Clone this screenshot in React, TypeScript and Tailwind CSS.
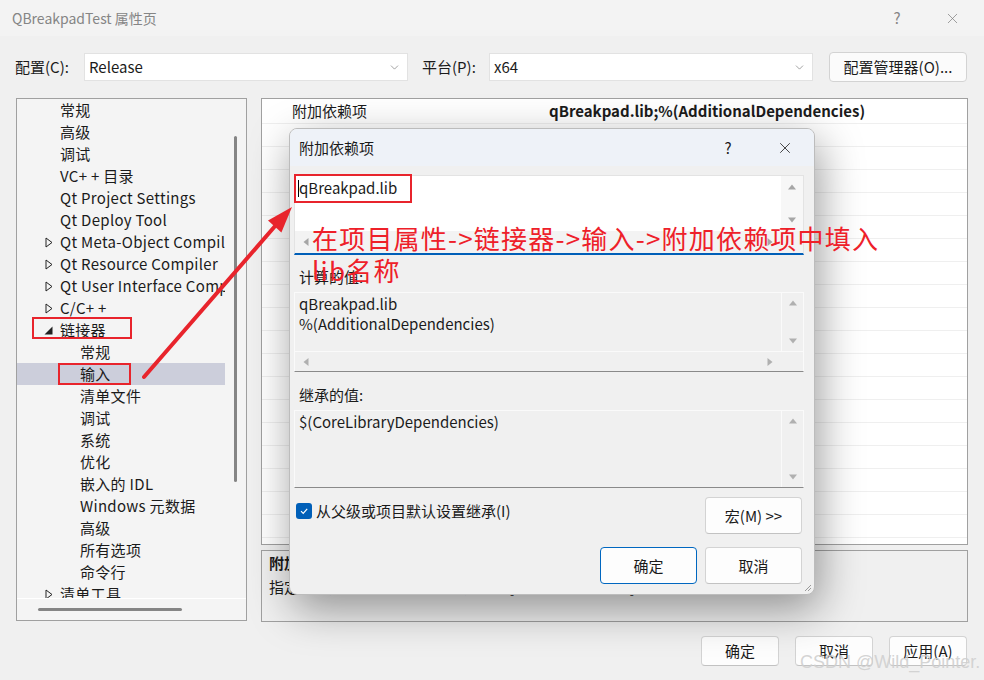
import React from 'react'
import { ChevronDown, X } from 'lucide-react'

type Item = { t: string; l: 1 | 2; a?: 'c' | 'e'; sel?: boolean }

const tree: Item[] = [
  { t: '常规', l: 1 },
  { t: '高级', l: 1 },
  { t: '调试', l: 1 },
  { t: 'VC+ + 目录', l: 1 },
  { t: 'Qt Project Settings', l: 1 },
  { t: 'Qt Deploy Tool', l: 1 },
  { t: 'Qt Meta-Object Compiler', l: 1, a: 'c' },
  { t: 'Qt Resource Compiler', l: 1, a: 'c' },
  { t: 'Qt User Interface Compiler', l: 1, a: 'c' },
  { t: 'C/C+ +', l: 1, a: 'c' },
  { t: '链接器', l: 1, a: 'e' },
  { t: '常规', l: 2 },
  { t: '输入', l: 2, sel: true },
  { t: '清单文件', l: 2 },
  { t: '调试', l: 2 },
  { t: '系统', l: 2 },
  { t: '优化', l: 2 },
  { t: '嵌入的 IDL', l: 2 },
  { t: 'Windows 元数据', l: 2 },
  { t: '高级', l: 2 },
  { t: '所有选项', l: 2 },
  { t: '命令行', l: 2 },
  { t: '清单工具', l: 1, a: 'c' },
]

const Arrow = ({ d, c = '#a6a6a6' }: { d: 'u' | 'd' | 'l' | 'r'; c?: string }) => {
  const pts = { u: '4,1.5 8,6.5 0,6.5', d: '0,1.5 8,1.5 4,6.5', l: '6.5,0 6.5,8 1.5,4', r: '1.5,0 1.5,8 6.5,4' }[d]
  return (
    <svg width="8" height="8" viewBox="0 0 8 8">
      <polygon points={pts} fill={c} />
    </svg>
  )
}

const Tri = ({ a }: { a?: 'c' | 'e' }) => {
  if (a === 'c')
    return (
      <svg width="8" height="11" viewBox="0 0 8 11">
        <polygon points="1,1 7,5.5 1,10" fill="none" stroke="#222" strokeWidth="1" />
      </svg>
    )
  if (a === 'e')
    return (
      <svg width="9" height="9" viewBox="0 0 9 9">
        <polygon points="8.5,0.5 8.5,8.5 0.5,8.5" fill="#222" />
      </svg>
    )
  return null
}

const Btn = ({ children, w, primary }: { children: React.ReactNode; w: string; primary?: boolean }) => (
  <div
    className={`${w} h-full flex items-center justify-center rounded-[4px] bg-[#fdfdfd] border ${
      primary ? 'border-[#0067c0]' : 'border-[#d3d3d3] border-b-[#c2c2c2]'
    }`}
  >
    {children}
  </div>
)

const App = () => {
  return (
    <div className="relative w-[984px] h-[680px] overflow-hidden bg-[#f0f0f0] font-['Noto_Sans_CJK_SC',sans-serif] text-[15px] leading-[20px] text-[#1b1b1b]">
      {/* window title */}
      <div className="h-[36px] bg-[#f3f3f3] flex items-center pl-[12px] text-[#858585] text-[14px]">
        <span>QBreakpadTest 属性页</span>
        <span className="ml-auto w-[46px] text-center text-[15px]">?</span>
        <span className="ml-[9px] mr-[9px] w-[46px] flex justify-center">
          <X size={17} strokeWidth={1} color="#7a7a7a" />
        </span>
      </div>

      {/* config row */}
      <div className="mt-[16px] h-[30px] flex items-center">
        <span className="ml-[15px] w-[69px]">配置(C):</span>
        <div className="w-[324px] h-[28px] bg-white border border-[#e2e2e2] flex items-center pl-[4px] pr-[6px]">
          <span>Release</span>
          <ChevronDown size={13} strokeWidth={1} className="ml-auto" color="#555" />
        </div>
        <span className="ml-[14px] w-[67px]">平台(P):</span>
        <div className="w-[324px] h-[28px] bg-white border border-[#e2e2e2] flex items-center pl-[4px] pr-[6px]">
          <span>x64</span>
          <ChevronDown size={13} strokeWidth={1} className="ml-auto" color="#555" />
        </div>
        <div className="ml-[16px] w-[138px] h-[30px] rounded-[4px] bg-[#fbfbfb] border border-[#d3d3d3] flex items-center justify-center">
          配置管理器(O)...
        </div>
      </div>

      {/* main */}
      <div className="mt-[16px] flex px-[16px] gap-[14px]">
        <div className="w-[231px] h-[523px] border border-[#a0a0a0] bg-[#f4f4f4] flex flex-col">
          <div className="flex flex-1 min-h-0">
            <div className="w-[208px] overflow-hidden">
              {tree.map((it, i) => (
                <div
                  key={i}
                  className={`h-[22px] flex items-center whitespace-nowrap ${it.sel ? 'bg-[#cccedb]' : ''}`}
                >
                  <span className={`${it.l === 1 ? 'w-[43px]' : 'w-[63px]'} shrink-0 flex justify-end pr-[7px]`}>
                    <Tri a={it.a} />
                  </span>
                  <span className="tracking-[0.3px]">{it.t}</span>
                </div>
              ))}
            </div>
            <div className="flex-1 pt-[37px] pl-[9px]">
              <div className="w-[3px] h-[346px] bg-[#858585] rounded-full" />
            </div>
          </div>
          <div className="h-[22px] border-t border-white flex items-center pl-[21px]">
            <div className="w-[144px] h-[3px] bg-[#858585] rounded-full" />
          </div>
        </div>

        <div className="w-[707px] flex flex-col gap-[5px]">
          <div className="h-[447px] border border-[#a0a0a0] bg-white overflow-hidden">
            <div className="h-[25px] flex items-center border-b border-[#efefef]">
              <div className="w-[284px] pl-[30px]">附加依赖项</div>
              <div className="pl-[3px] font-bold">qBreakpad.lib;%(AdditionalDependencies)</div>
            </div>
            {Array.from({ length: 18 }).map((_, i) => (
              <div key={i} className="h-[23px] border-b border-[#efefef]" />
            ))}
          </div>
          <div className="h-[72px] border border-[#a0a0a0] px-[7px] pt-[1px]">
            <div className="font-bold leading-[22px]">附加依赖项</div>
            <div className="mt-[2px] leading-[22px]">指定要添加到链接命令行的附加项。[例如 kernel32.lib]</div>
          </div>
        </div>
      </div>

      {/* bottom buttons */}
      <div className="mt-[14px] h-[30px] flex justify-end gap-[16px] pr-[17px]">
        <Btn w="w-[78px]">确定</Btn>
        <Btn w="w-[78px]">取消</Btn>
        <Btn w="w-[78px]">应用(A)</Btn>
      </div>

      {/* dialog */}
      <div className="absolute left-[289px] top-[128px] w-[526px] h-[467px] rounded-[8px] border border-[#bcbcbc] bg-[#f0f0f0] shadow-[4px_14px_44px_rgba(0,0,0,0.4)] overflow-hidden flex flex-col">
        <div className="h-[37px] shrink-0 bg-[#eef2f8] flex items-center pl-[9px]">
          <span>附加依赖项</span>
          <span className="ml-auto w-[46px] text-center">?</span>
          <span className="ml-[11px] mr-[6px] w-[46px] flex justify-center">
            <X size={18} strokeWidth={1.1} color="#222" />
          </span>
        </div>
        <div className="px-[4px] flex flex-col">
          {/* box 1 */}
          <div className="mt-[9px] w-[510px] h-[80px] border border-[#e3e3e3] border-b-2 border-b-[#005fb8] bg-white flex flex-col">
            <div className="flex-1 flex">
              <div className="flex-1 flex items-start pl-[3px] pt-[2px]">
                <span className="mt-[2px] w-px h-[17px] bg-black" />
                <span>qBreakpad.lib</span>
              </div>
              <div className="w-[22px] bg-[#f7f7f7] flex flex-col items-center justify-between py-[7px]">
                <Arrow d="u" />
                <Arrow d="d" />
              </div>
            </div>
            <div className="h-[22px] flex">
              <div className="flex-1 bg-[#f3f3f3] flex items-center justify-between px-[7px]">
                <Arrow d="l" />
                <Arrow d="r" />
              </div>
              <div className="w-[22px] bg-[#f3f3f3]" />
            </div>
          </div>

          <div className="h-[37px] pt-[12px] pl-[5px]">计算的值:</div>

          {/* box 2 */}
          <div className="w-[510px] h-[80px] border border-[#fafafa] border-b-[#8a8a8a] flex flex-col">
            <div className="h-[58px] flex">
              <div className="flex-1 pl-[4px] pt-[1px]">
                <div>qBreakpad.lib</div>
                <div>%(AdditionalDependencies)</div>
              </div>
              <div className="w-[22px] border-l border-[#fafafa] flex flex-col items-center justify-between py-[6px]">
                <Arrow d="u" c="#b0b0b0" />
                <Arrow d="d" c="#b0b0b0" />
              </div>
            </div>
            <div className="flex-1 flex border-t border-[#fafafa]">
              <div className="flex-1 flex items-center justify-between px-[7px]">
                <Arrow d="l" c="#b0b0b0" />
                <Arrow d="r" c="#b0b0b0" />
              </div>
              <div className="w-[22px]" />
            </div>
          </div>

          <div className="h-[38px] pt-[13px] pl-[5px]">继承的值:</div>

          {/* box 3 */}
          <div className="w-[510px] h-[78px] border border-[#fafafa] border-b-[#8a8a8a] flex">
            <div className="flex-1 pl-[4px] pt-[1px]">$(CoreLibraryDependencies)</div>
            <div className="w-[22px] border-l border-[#fafafa] flex flex-col items-center justify-between py-[6px]">
              <Arrow d="u" c="#b0b0b0" />
              <Arrow d="d" c="#b0b0b0" />
            </div>
          </div>

          <div className="mt-[9px] h-[37px] flex items-start mr-[8px]">
            <div className="ml-[2px] mt-[6px] w-[16px] h-[16px] rounded-[3px] bg-[#005fb8] flex items-center justify-center">
              <svg width="10" height="10" viewBox="0 0 10 10">
                <polyline points="2,5.2 4.2,7.4 8.2,2.8" fill="none" stroke="white" strokeWidth="1.2" />
              </svg>
            </div>
            <span className="ml-[4px] mt-[4px]">从父级或项目默认设置继承(I)</span>
            <div className="ml-auto h-full">
              <Btn w="w-[97px]">宏(M) &gt;&gt;</Btn>
            </div>
          </div>

          <div className="mt-[13px] h-[37px] flex justify-end gap-[8px] mr-[8px]">
            <Btn w="w-[97px]" primary>
              确定
            </Btn>
            <Btn w="w-[97px]">取消</Btn>
          </div>
        </div>
        <svg className="absolute right-[2px] bottom-[2px]" width="10" height="10" viewBox="0 0 10 10">
          <line x1="9" y1="3" x2="3" y2="9" stroke="#9a9a9a" strokeWidth="1" />
          <line x1="9" y1="6" x2="6" y2="9" stroke="#9a9a9a" strokeWidth="1" />
        </svg>
      </div>

      {/* annotations */}
      <svg className="absolute inset-0 pointer-events-none" width="984" height="680" viewBox="0 0 984 680">
        <rect x="33" y="318" width="98" height="20" fill="none" stroke="#e8242c" strokeWidth="2" />
        <rect x="59" y="364" width="71" height="20" fill="none" stroke="#e8242c" strokeWidth="2" />
        <rect x="295" y="175" width="116" height="27" fill="none" stroke="#e8242c" strokeWidth="2" />
        <line x1="144" y1="377" x2="276" y2="225" stroke="#e8242c" strokeWidth="4" strokeLinecap="round" />
        <polygon points="292,207 281.4,232.4 268,220.4" fill="#e8242c" />
      </svg>
      <div className="absolute left-[312px] top-[222px] text-[26px] leading-[32px] tracking-[1.2px] text-[#ee2029] whitespace-nowrap">
        在项目属性-&gt;链接器-&gt;输入-&gt;附加依赖项中填入
        <br />
        lib名称
      </div>
      <div className="absolute left-[800px] top-[650px] font-['Liberation_Sans',sans-serif] text-[18px] leading-[24px] text-[#cfcfcf]/90 whitespace-nowrap">
        CSDN @Wild_Pointer.
      </div>
    </div>
  )
}

export default App
